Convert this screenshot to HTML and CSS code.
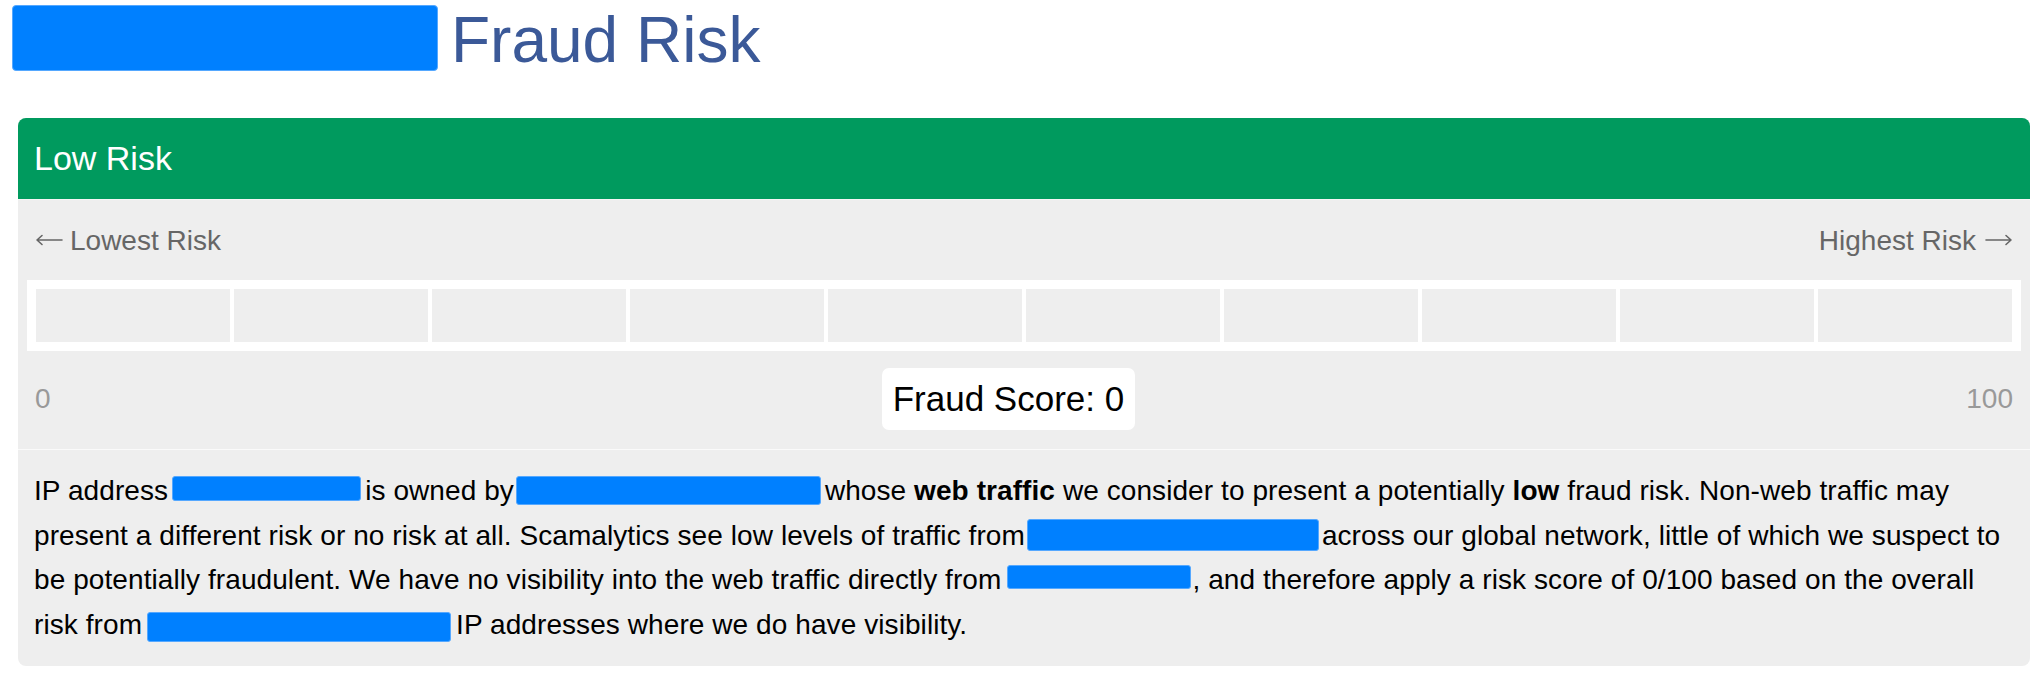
FILE: index.html
```html
<!DOCTYPE html>
<html lang="en">
<head>
<meta charset="utf-8">
<title>Fraud Risk</title>
<link rel="stylesheet" href="styles.css">
</head>
<body>
<div class="page">
  <header class="title-row">
    <span class="redact redact-title"></span>
    <h1 class="title">Fraud Risk</h1>
  </header>
  <section class="panel">
    <div class="panel-heading">Low Risk</div>
    <div class="gauge">
      <div class="gauge-labels">
        <span class="label"><svg class="arrow arrow-left" width="28" height="12" viewBox="0 0 28 12" aria-hidden="true"><path d="M2 6H27M7 1.5L2 6L7 10.5" fill="none" stroke="#666" stroke-width="1.6" stroke-linecap="round" stroke-linejoin="round"/></svg>Lowest Risk</span>
        <span class="label">Highest Risk<svg class="arrow arrow-right" width="28" height="12" viewBox="0 0 28 12" aria-hidden="true"><path d="M1 6H26M21 1.5L26 6L21 10.5" fill="none" stroke="#666" stroke-width="1.6" stroke-linecap="round" stroke-linejoin="round"/></svg></span>
      </div>
      <div class="bar">
        <div class="seg"></div><div class="seg"></div><div class="seg"></div><div class="seg"></div><div class="seg"></div>
        <div class="seg"></div><div class="seg"></div><div class="seg"></div><div class="seg"></div><div class="seg"></div>
      </div>
      <div class="scale">
        <span class="scale-end">0</span>
        <span class="score">Fraud Score: 0</span>
        <span class="scale-end">100</span>
      </div>
    </div>
    <div class="panel-body">
      <p class="desc">IP address<span class="redact r1"></span>is owned by<span class="redact r2"></span>whose <b>web traffic</b> we consider to present a potentially <b>low</b> fraud risk. Non-web traffic may<br>present a different risk or no risk at all. Scamalytics see low levels of traffic from<span class="redact r3"></span>across our global network, little of which we suspect to<br>be potentially fraudulent. We have no visibility into the web traffic directly from<span class="redact r4"></span>, and therefore apply a risk score of 0/100 based on the overall<br>risk from<span class="redact r5"></span>IP addresses where we do have visibility.</p>
    </div>
  </section>
</div>
</body>
</html>
```
FILE: styles.css
```css
html, body {
  margin: 0;
  padding: 0;
  background: #ffffff;
}

body {
  font-family: "Liberation Sans", Arial, sans-serif;
  color: #000;
}

.page {
  padding: 5px 12px 0 12px;
}

.title-row {
  display: flex;
  align-items: flex-start;
  height: 66px;
}

.redact {
  display: inline-block;
  box-sizing: border-box;
  background: #0080ff;
  border: 1px solid #55a8ff;
  border-radius: 3px;
}

.redact-title {
  width: 426px;
  height: 66px;
  border-radius: 4px;
  margin-right: 13px;
  flex: none;
}

.title {
  margin: 2px 0 0 0;
  font-size: 64px;
  line-height: 66px;
  font-weight: normal;
  color: #3b5998;
}

.panel {
  margin: 47px 0 0 6px;
  background: #eeeeee;
  border-radius: 8px;
  overflow: hidden;
}

.panel-heading {
  background: #009a5e;
  color: #ffffff;
  font-size: 34px;
  line-height: 40px;
  padding: 20px 16px 21px 16px;
  border-bottom: 1px solid #f6f6f6;
}

.gauge {
  padding: 21px 9px 19px 9px;
  border-bottom: 1px solid #fafafa;
}

.gauge-labels {
  display: flex;
  justify-content: space-between;
  padding: 0 8px;
  font-size: 28px;
  line-height: 40px;
  color: #666666;
}

.arrow {
  display: inline-block;
  vertical-align: 4px;
}

.arrow-left {
  margin-right: 7px;
}

.arrow-right {
  margin-left: 9px;
}

.bar {
  margin-top: 19px;
  background: #ffffff;
  padding: 9px;
  display: flex;
  gap: 4px;
}

.seg {
  flex: 1;
  height: 53px;
  background: #eeeeee;
}

.scale {
  margin-top: 17px;
  display: flex;
  justify-content: space-between;
  align-items: center;
  padding: 0 8px;
}

.scale-end {
  font-size: 28px;
  line-height: 40px;
  color: #999999;
}

.score {
  background: #ffffff;
  border-radius: 7px;
  padding: 10px 10.5px;
  font-size: 35px;
  line-height: 42px;
  color: #000000;
}

.panel-body {
  padding: 19px 16px 18px 16px;
}

.desc {
  margin: 0;
  font-size: 28px;
  line-height: 44.7px;
  letter-spacing: 0.08px;
  color: #000000;
}

.desc b {
  font-weight: bold;
}

.r1 { width: 189px; height: 25px; margin: 0 4px 0 4px; vertical-align: -1px; }
.r2 { width: 305px; height: 29px; margin: 0 4px 0 2px; vertical-align: -5px; }
.r3 { width: 292px; height: 32px; margin: 0 3px 0 2px; vertical-align: -6px; }
.r4 { width: 184px; height: 24px; margin: 0 1px 0 6px; vertical-align: 0; }
.r5 { width: 304px; height: 30px; margin: 0 5px 0 5px; vertical-align: -8px; }
```
